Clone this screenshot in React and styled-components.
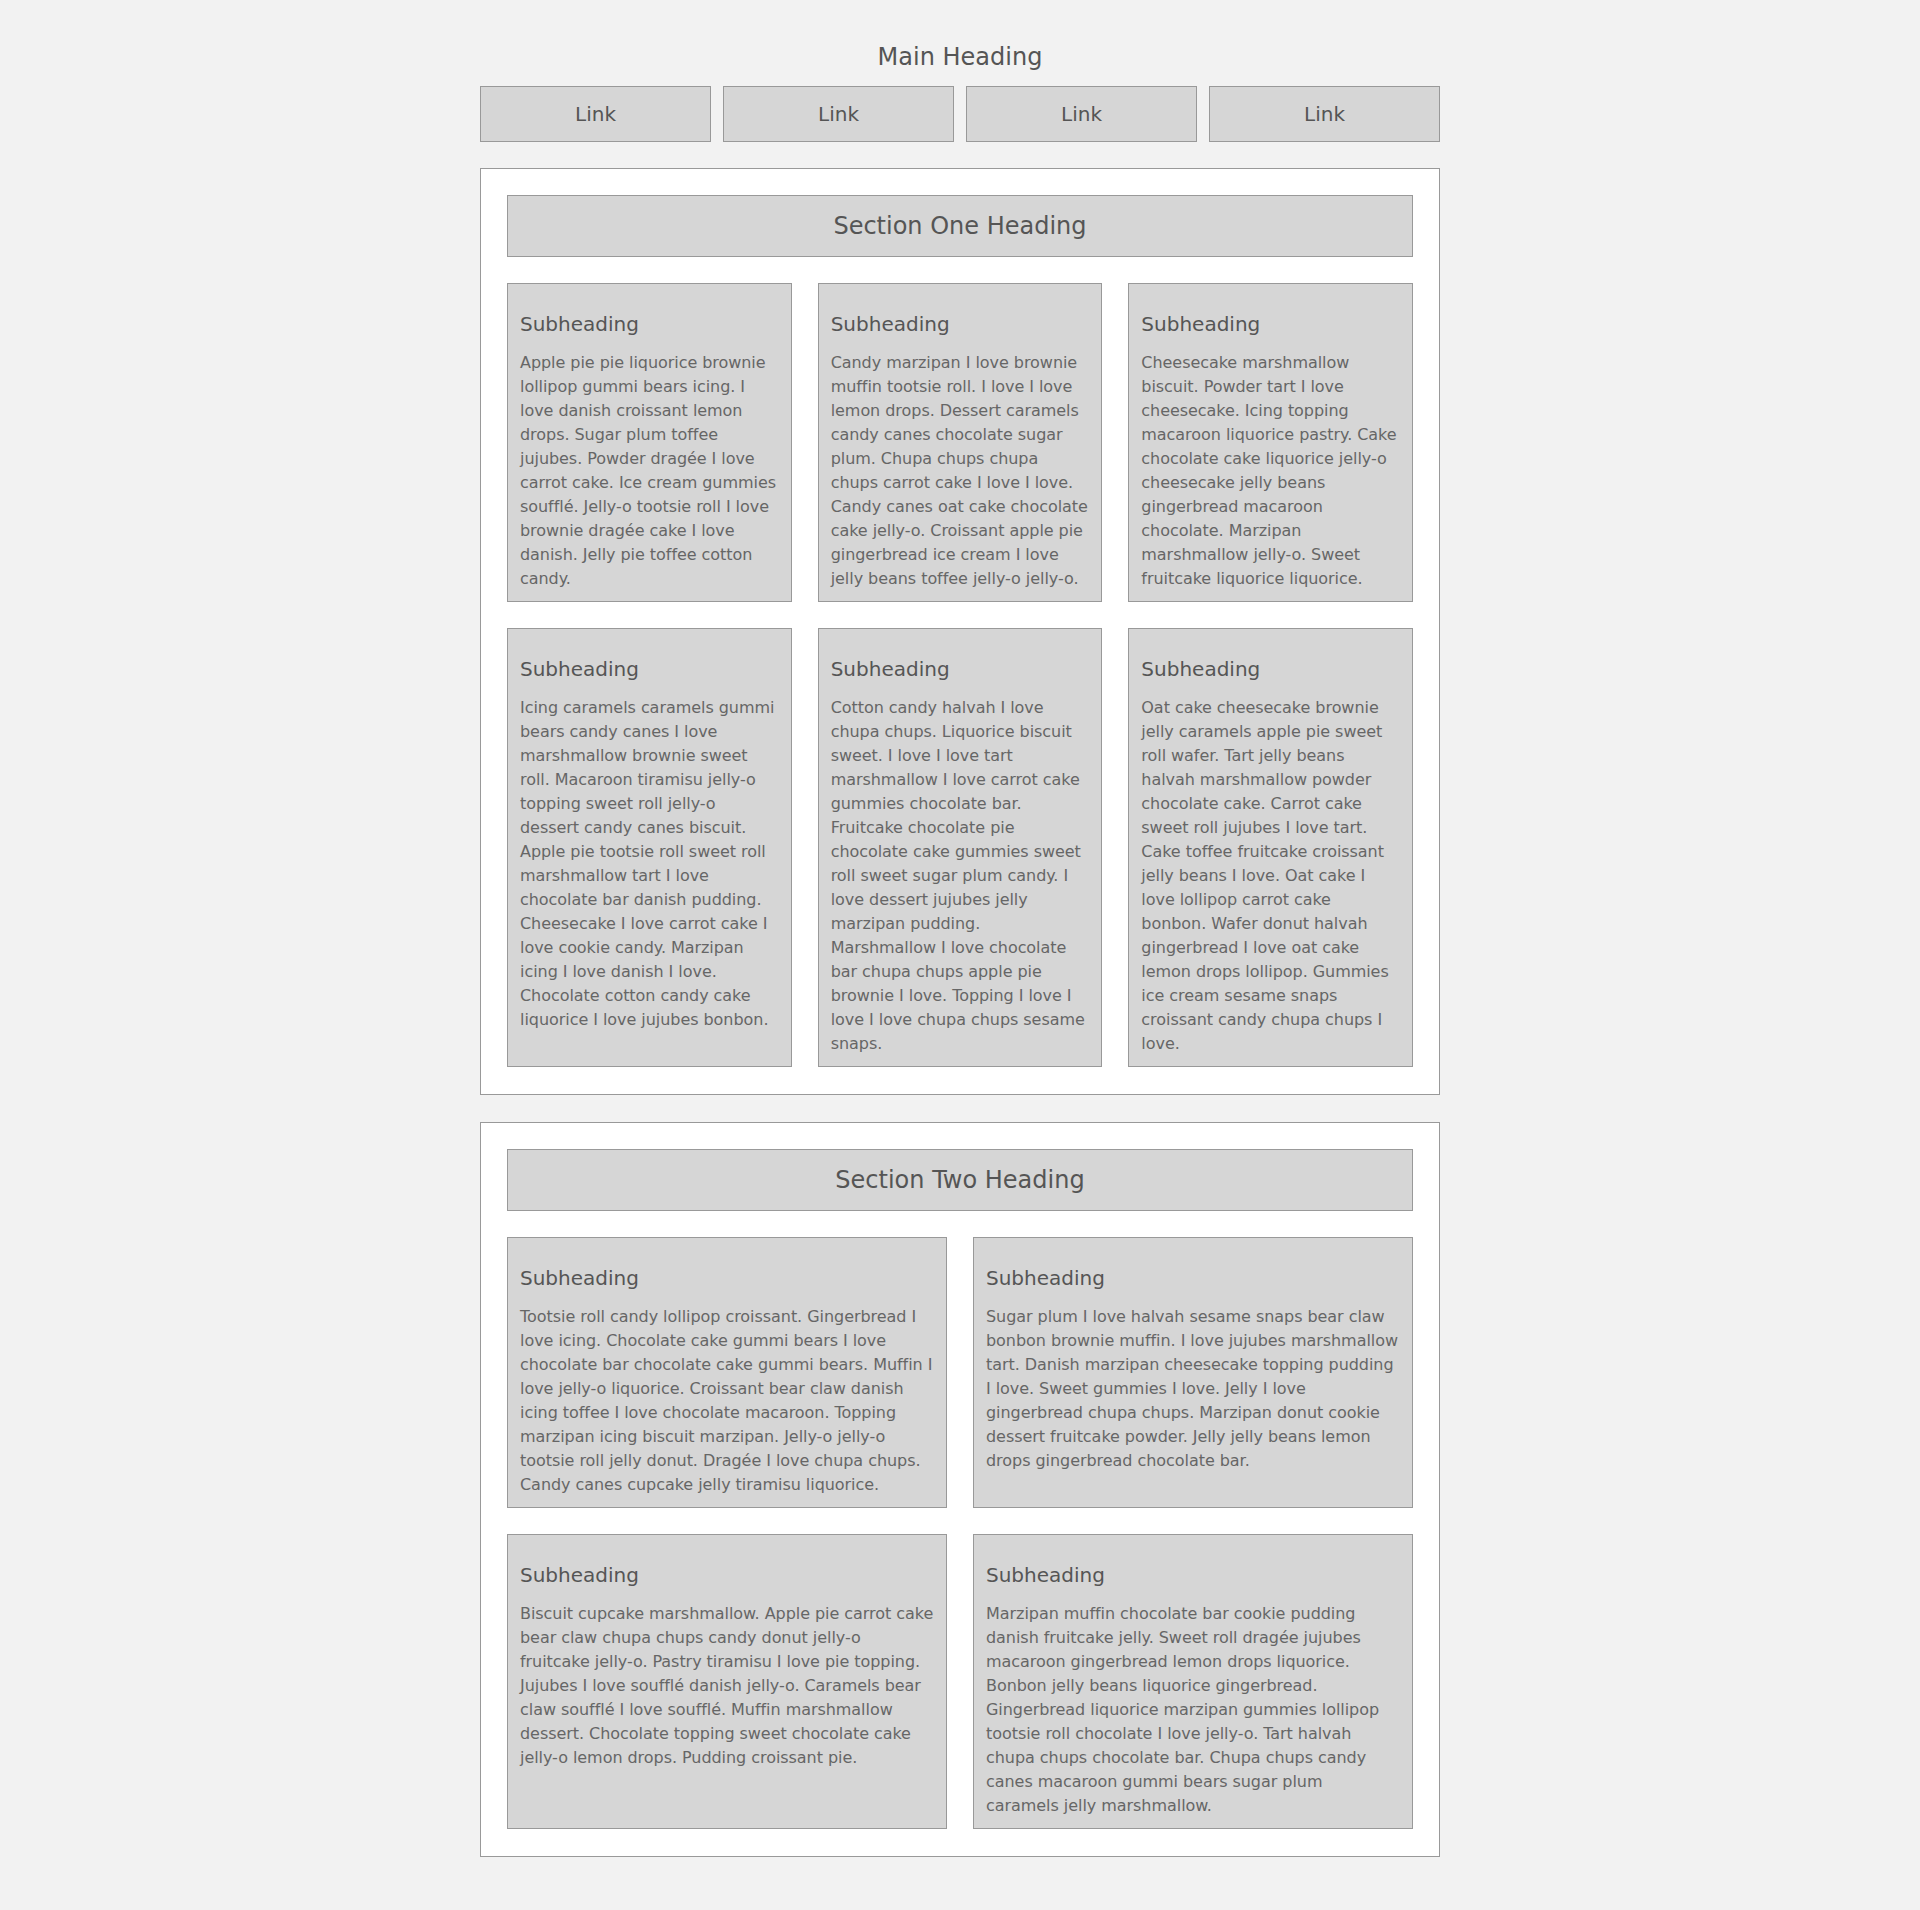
import React from 'react';
import styled, { createGlobalStyle } from 'styled-components';

const GlobalStyle = createGlobalStyle`
    * {
        box-sizing: border-box;
    }

    body {
        margin: 0;
        background-color: #f2f2f2;
        font-family: "DejaVu Sans", Verdana, sans-serif;
        color: #666;
    }
`;

const Page = styled.div`
    width: 960px;
    margin: 0 auto;
    padding: 39px 0 26px;
`;

const Title = styled.h1`
    margin: 0 0 11px;
    font-size: 24px;
    line-height: 36px;
    font-weight: normal;
    text-align: center;
    color: #555;
`;

const Nav = styled.nav`
    display: grid;
    grid-template-columns: repeat(4, 1fr);
    gap: 12px;
    margin-bottom: 26px;
`;

const NavLink = styled.a`
    display: block;
    padding: 12px;
    background-color: #d6d6d6;
    border: 1px solid #999;
    font-size: 20px;
    line-height: 30px;
    text-align: center;
    color: #555;
    text-decoration: none;
`;

const Section = styled.section`
    background-color: #fff;
    border: 1px solid #999;
    padding: 26px 26px 27px;
    margin-bottom: 27px;
`;

const SectionHeading = styled.h2`
    margin: 0 0 26px;
    padding: 12px;
    background-color: #d6d6d6;
    border: 1px solid #999;
    font-size: 24px;
    line-height: 36px;
    font-weight: normal;
    text-align: center;
    color: #555;
`;

const Grid = styled.div`
    display: grid;
    grid-template-columns: repeat(${props => props.cols}, 1fr);
    gap: 26px;
`;

const Card = styled.article`
    padding: 25px 12px 10px;
    background-color: #d6d6d6;
    border: 1px solid #999;
`;

const Subheading = styled.h3`
    margin: 0 0 12px;
    font-size: 20px;
    line-height: 30px;
    font-weight: normal;
    color: #555;
`;

// DejaVu runs a touch wider than Verdana on some words, pull it in slightly
const Text = styled.p`
    margin: 0;
    font-size: 16px;
    line-height: 24px;
    letter-spacing: -0.05px;
`;

const sectionOne = [
    'Apple pie pie liquorice brownie lollipop gummi bears icing. I love danish croissant lemon drops. Sugar plum toffee jujubes. Powder dragée I love carrot cake. Ice cream gummies soufflé. Jelly-o tootsie roll I love brownie dragée cake I love danish. Jelly pie toffee cotton candy.',
    'Candy marzipan I love brownie muffin tootsie roll. I love I love lemon drops. Dessert caramels candy canes chocolate sugar plum. Chupa chups chupa chups carrot cake I love I love. Candy canes oat cake chocolate cake jelly-o. Croissant apple pie gingerbread ice cream I love jelly beans toffee jelly-o jelly-o.',
    'Cheesecake marshmallow biscuit. Powder tart I love cheesecake. Icing topping macaroon liquorice pastry. Cake chocolate cake liquorice jelly-o cheesecake jelly beans gingerbread macaroon chocolate. Marzipan marshmallow jelly-o. Sweet fruitcake liquorice liquorice.',
    'Icing caramels caramels gummi bears candy canes I love marshmallow brownie sweet roll. Macaroon tiramisu jelly-o topping sweet roll jelly-o dessert candy canes biscuit. Apple pie tootsie roll sweet roll marshmallow tart I love chocolate bar danish pudding. Cheesecake I love carrot cake I love cookie candy. Marzipan icing I love danish I love. Chocolate cotton candy cake liquorice I love jujubes bonbon.',
    'Cotton candy halvah I love chupa chups. Liquorice biscuit sweet. I love I love tart marshmallow I love carrot cake gummies chocolate bar. Fruitcake chocolate pie chocolate cake gummies sweet roll sweet sugar plum candy. I love dessert jujubes jelly marzipan pudding. Marshmallow I love chocolate bar chupa chups apple pie brownie I love. Topping I love I love I love chupa chups sesame snaps.',
    'Oat cake cheesecake brownie jelly caramels apple pie sweet roll wafer. Tart jelly beans halvah marshmallow powder chocolate cake. Carrot cake sweet roll jujubes I love tart. Cake toffee fruitcake croissant jelly beans I love. Oat cake I love lollipop carrot cake bonbon. Wafer donut halvah gingerbread I love oat cake lemon drops lollipop. Gummies ice cream sesame snaps croissant candy chupa chups I love.',
];

const sectionTwo = [
    'Tootsie roll candy lollipop croissant. Gingerbread I love icing. Chocolate cake gummi bears I love chocolate bar chocolate cake gummi bears. Muffin I love jelly-o liquorice. Croissant bear claw danish icing toffee I love chocolate macaroon. Topping marzipan icing biscuit marzipan. Jelly-o jelly-o tootsie roll jelly donut. Dragée I love chupa chups. Candy canes cupcake jelly tiramisu liquorice.',
    'Sugar plum I love halvah sesame snaps bear claw bonbon brownie muffin. I love jujubes marshmallow tart. Danish marzipan cheesecake topping pudding I love. Sweet gummies I love. Jelly I love gingerbread chupa chups. Marzipan donut cookie dessert fruitcake powder. Jelly jelly beans lemon drops gingerbread chocolate bar.',
    'Biscuit cupcake marshmallow. Apple pie carrot cake bear claw chupa chups candy donut jelly-o fruitcake jelly-o. Pastry tiramisu I love pie topping. Jujubes I love soufflé danish jelly-o. Caramels bear claw soufflé I love soufflé. Muffin marshmallow dessert. Chocolate topping sweet chocolate cake jelly-o lemon drops. Pudding croissant pie.',
    'Marzipan muffin chocolate bar cookie pudding danish fruitcake jelly. Sweet roll dragée jujubes macaroon gingerbread lemon drops liquorice. Bonbon jelly beans liquorice gingerbread. Gingerbread liquorice marzipan gummies lollipop tootsie roll chocolate I love jelly-o. Tart halvah chupa chups chocolate bar. Chupa chups candy canes macaroon gummi bears sugar plum caramels jelly marshmallow.',
];

const ContentSection = ({ heading, items, cols }) => {
    return (
        <Section>
            <SectionHeading>{heading}</SectionHeading>
            <Grid cols={cols}>
                {items.map((text, i) => (
                    <Card key={i}>
                        <Subheading>Subheading</Subheading>
                        <Text>{text}</Text>
                    </Card>
                ))}
            </Grid>
        </Section>
    );
};

const App = () => {
    return (
        <Page>
            <GlobalStyle />
            <Title>Main Heading</Title>
            <Nav>
                {[1, 2, 3, 4].map(n => (
                    <NavLink key={n} href="#">Link</NavLink>
                ))}
            </Nav>
            <ContentSection heading="Section One Heading" items={sectionOne} cols={3} />
            <ContentSection heading="Section Two Heading" items={sectionTwo} cols={2} />
        </Page>
    );
};

export default App;
